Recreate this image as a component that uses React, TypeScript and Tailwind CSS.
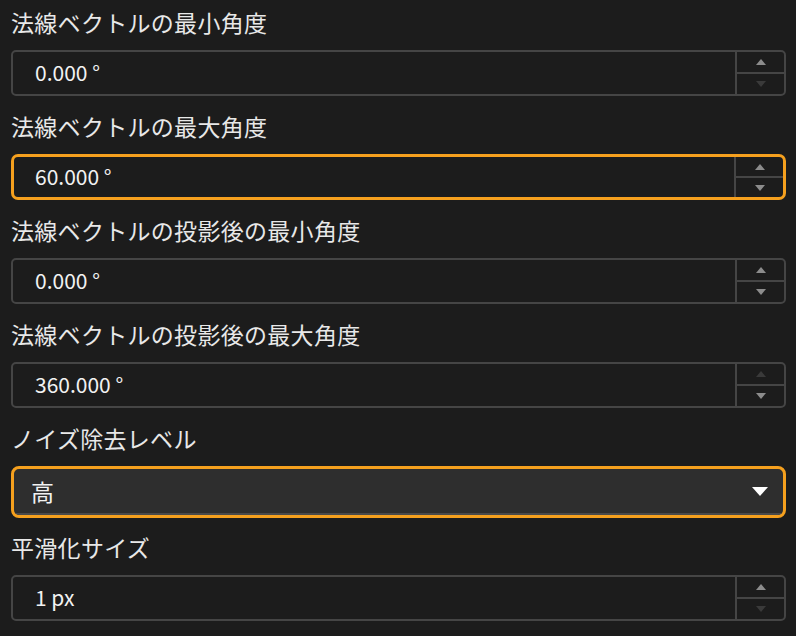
import React from "react";

type SpinField = { label: string; value: string; up: boolean; down: boolean; focused?: boolean };

const fields: SpinField[] = [
  { label: "法線ベクトルの最小角度", value: "0.000 °", up: true, down: false },
  { label: "法線ベクトルの最大角度", value: "60.000 °", up: true, down: true, focused: true },
  { label: "法線ベクトルの投影後の最小角度", value: "0.000 °", up: true, down: true },
  { label: "法線ベクトルの投影後の最大角度", value: "360.000 °", up: false, down: true },
];

function Label({ text }: { text: string }) {
  return (
    <div className="h-[50px] flex items-center pb-[5px] text-[23px] text-[#e8e8e8] tracking-[0.3px]">
      {text}
    </div>
  );
}

function Arrow({ dir, on }: { dir: "up" | "down"; on: boolean }) {
  return (
    <svg width="10" height="6" viewBox="0 0 10 6">
      <path d={dir === "up" ? "M5 0 L10 6 L0 6 Z" : "M0 0 L10 0 L5 6 Z"} fill={on ? "#8c8c8c" : "#3a3a3a"} />
    </svg>
  );
}

function SpinBox({ f }: { f: SpinField }) {
  return (
    <div
      className={
        "h-[46px] flex " +
        (f.focused ? "rounded-[7px] border-[3px] border-[#f5a01e]" : "rounded-[5px] border-2 border-[#454545]")
      }
    >
      <div className={"flex-1 flex items-center text-[21px] text-[#f2f2f2] " + (f.focused ? "pl-[21px]" : "pl-[22px]")}>
        {f.value}
      </div>
      <div className="w-[49px] flex flex-col border-l-2 border-[#454545]">
        <div className="flex-1 flex items-center justify-center border-b-2 border-[#454545]">
          <Arrow dir="up" on={f.up} />
        </div>
        <div className="flex-1 flex items-center justify-center">
          <Arrow dir="down" on={f.down} />
        </div>
      </div>
    </div>
  );
}

export default function App() {
  return (
    <div
      className="w-[796px] h-[636px] bg-[#1c1c1c] pl-[11px] pr-[10px] overflow-hidden"
      style={{ fontFamily: '"Noto Sans CJK JP", "Noto Sans", sans-serif' }}
    >
      {fields.map((f) => (
        <div key={f.label} className="pb-[8px]">
          <Label text={f.label} />
          <SpinBox f={f} />
        </div>
      ))}

      <div className="pb-[7px]">
        <Label text="ノイズ除去レベル" />
        <div className="h-[52px] rounded-[8px] border-[3px] border-[#f5a01e] bg-[#2e2e2e] flex items-center overflow-hidden">
          <div className="flex-1 h-full flex items-center pl-[17px] text-[23px] text-[#f2f2f2] border-b-2 border-[#4a4a4a]">
            高
          </div>
          <div className="h-full flex items-center pr-[15px] border-b-2 border-[#4a4a4a]">
            <svg width="16" height="9" viewBox="0 0 16 9">
              <path d="M0 0 L16 0 L8 9 Z" fill="#ffffff" />
            </svg>
          </div>
        </div>
      </div>

      <div>
        <Label text="平滑化サイズ" />
        <SpinBox f={{ label: "平滑化サイズ", value: "1 px", up: true, down: false }} />
      </div>
    </div>
  );
}
